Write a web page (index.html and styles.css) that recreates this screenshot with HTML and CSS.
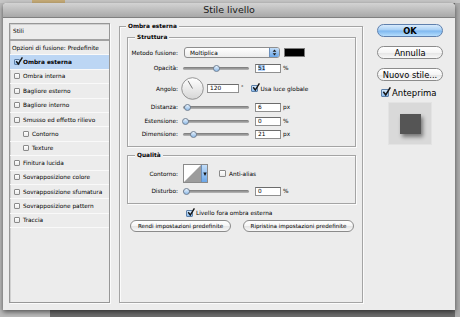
FILE: index.html
```html
<!DOCTYPE html>
<html lang="it">
<head>
  <meta charset="UTF-8" />
  <title>Stile livello</title>
  <link rel="stylesheet" href="styles.css">
</head>
<body>
<div class="desk-top"><span class="desk-tab"></span></div>
<div class="desk">
  <div class="window">
    <div class="titlebar">Stile livello</div>

    <div class="content">
      <!-- ===== Elenco stili ===== -->
      <div class="styles-list">
        <div class="list-head">Stili</div>
        <div class="item plain">Opzioni di fusione: Predefinite</div>
        <div class="item selected"><span class="cb on"><svg viewBox="0 0 8 8"><path d="M1.2 4.3 L3.3 7 L7.4 0.4"/></svg></span>Ombra esterna</div>
        <div class="item"><span class="cb"></span>Ombra interna</div>
        <div class="item"><span class="cb"></span>Bagliore esterno</div>
        <div class="item"><span class="cb"></span>Bagliore interno</div>
        <div class="item"><span class="cb"></span>Smusso ed effetto rilievo</div>
        <div class="item indent"><span class="cb"></span>Contorno</div>
        <div class="item indent"><span class="cb"></span>Texture</div>
        <div class="item"><span class="cb"></span>Finitura lucida</div>
        <div class="item"><span class="cb"></span>Sovrapposizione colore</div>
        <div class="item"><span class="cb"></span>Sovrapposizione sfumatura</div>
        <div class="item"><span class="cb"></span>Sovrapposizione pattern</div>
        <div class="item"><span class="cb"></span>Traccia</div>
      </div>

      <!-- ===== Ombra esterna ===== -->
      <fieldset class="group main-group">
        <legend>Ombra esterna</legend>

        <fieldset class="group sub">
          <legend>Struttura</legend>
          <div class="row r-blend">
            <span class="lbl">Metodo fusione:</span>
            <div class="select">Moltiplica
              <span class="stepper"><svg viewBox="0 0 6 9"><path d="M3 0.5 L5.4 3.6 L0.6 3.6 Z M3 8.5 L5.4 5.4 L0.6 5.4 Z"/></svg></span>
            </div>
            <span class="swatch"></span>
          </div>
          <div class="row r-opacity">
            <span class="lbl">Opacità:</span>
            <div class="slider"><span class="thumb" style="margin-left:30px"></span></div>
            <span class="field"><span class="sel">51</span></span>
            <span class="unit">%</span>
          </div>
          <div class="row r-angle">
            <span class="lbl">Angolo:</span>
            <svg class="dial" viewBox="0 0 23 23">
              <defs>
                <linearGradient id="dialFill" x1="0" y1="0" x2="0" y2="1">
                  <stop offset="0" stop-color="#ffffff"/>
                  <stop offset="1" stop-color="#d6d6d6"/>
                </linearGradient>
              </defs>
              <circle cx="11.5" cy="11.5" r="10.8" fill="url(#dialFill)" stroke="#8a8a8a" stroke-width="0.9"/>
              <line x1="11.5" y1="11.5" x2="7" y2="3.8" stroke="#555" stroke-width="0.8"/>
            </svg>
            <span class="field wide">120</span>
            <span class="deg">°</span>
            <span class="cb on mid"><svg viewBox="0 0 8 8"><path d="M1.2 4.3 L3.3 7 L7.4 0.4"/></svg></span>
            <span class="cb-text">Usa luce globale</span>
          </div>
          <div class="row r-dist">
            <span class="lbl">Distanza:</span>
            <div class="slider"><span class="thumb" style="margin-left:1px"></span></div>
            <span class="field">6</span>
            <span class="unit">px</span>
          </div>
          <div class="row r-spread">
            <span class="lbl">Estensione:</span>
            <div class="slider"><span class="thumb" style="margin-left:-1px"></span></div>
            <span class="field">0</span>
            <span class="unit">%</span>
          </div>
          <div class="row r-size">
            <span class="lbl">Dimensione:</span>
            <div class="slider"><span class="thumb" style="margin-left:7px"></span></div>
            <span class="field">21</span>
            <span class="unit">px</span>
          </div>
        </fieldset>

        <fieldset class="group sub quality">
          <legend>Qualità</legend>
          <div class="row r-contour">
            <span class="lbl">Contorno:</span>
            <span class="contour">
              <svg class="curve" viewBox="0 0 18 17" preserveAspectRatio="none"><path d="M0 17 L18 0 L18 17 Z"/></svg>
              <span class="contour-drop"><svg viewBox="0 0 4 6"><path d="M0.3 1.5 L3.7 1.5 L2 5 Z"/></svg></span>
            </span>
            <span class="cb aa"></span>
            <span class="cb-text">Anti-alias</span>
          </div>
          <div class="row r-noise">
            <span class="lbl">Disturbo:</span>
            <div class="slider"><span class="thumb" style="margin-left:0"></span></div>
            <span class="field">0</span>
            <span class="unit">%</span>
          </div>
        </fieldset>

        <div class="row r-knockout">
          <span class="cb on mid"><svg viewBox="0 0 8 8"><path d="M1.2 4.3 L3.3 7 L7.4 0.4"/></svg></span>
          <span class="cb-text">Livello fora ombra esterna</span>
        </div>
        <div class="defaults">
          <button class="pill small first">Rendi impostazioni predefinite</button>
          <button class="pill small second">Ripristina impostazioni predefinite</button>
        </div>
      </fieldset>

      <!-- ===== Pulsanti ===== -->
      <div class="side">
        <button class="pill big ok">OK</button>
        <button class="pill big">Annulla</button>
        <button class="pill big">Nuovo stile...</button>
        <div class="preview-toggle">
          <span class="cb on big-cb"><svg viewBox="0 0 8 8"><path d="M1.2 4.3 L3.3 7 L7.4 0.4"/></svg></span>
          <span>Anteprima</span>
        </div>
        <div class="preview"><span class="preview-square"></span></div>
      </div>
    </div>
  </div>
</div>
</body>
</html>
```

FILE: styles.css
```css
:root {
  --win: #ececec;
  --line: #a4a4a4;
  --hi: #fbfbfb;
  --sel: #bcd6f4;
}

/* ===== Reset ===== */
*, *::before, *::after { box-sizing: border-box; }
body {
  margin: 0;
  width: 460px;
  height: 317px;
  overflow: hidden;
  font-family: "DejaVu Sans", "Liberation Sans", sans-serif;
  font-size: 5.8px;
  color: #000;
  background: linear-gradient(to right, #b9b9b9 0, #b9b9b9 50px, #6c6c6c 50px, #6c6c6c 455px, #ababab 455px);
}
button { font-family: inherit; cursor: pointer; padding: 0; color: #000; }

/* ===== Desktop / window ===== */
.desk-top { height: 3px; background: #c6c6c6; display: flex; }
.desk-tab { width: 33px; margin-left: 32px; background: #c6ab77; }
.desk { display: flex; padding-left: 3px; }
.window {
  width: 452px;
  height: 307px;
  background: var(--win);
  border-radius: 4px 4px 0 0;
  box-shadow: 0 2px 5px rgba(0,0,0,.55);
}
.titlebar {
  height: 15px;
  line-height: 14px;
  text-align: center;
  font-size: 9.5px;
  color: #1a1a1a;
  background: linear-gradient(#d3d3d3, #a8a8a8);
  border-bottom: 1px solid #808080;
  border-radius: 4px 4px 0 0;
}
.content { display: flex; align-items: flex-start; padding: 4px 0 0 6px; }

/* ===== Styles list ===== */
.styles-list {
  width: 101px;
  height: 280px;
  flex: none;
  margin-top: 1px;
  border: 1px solid #979797;
  box-shadow: inset 1px 1px 0 #d0d0d0, 1px 1px 0 var(--hi);
}
.list-head {
  height: 17px;
  line-height: 15px;
  padding-left: 3px;
  border-bottom: 2px solid #a2a2a2;
}
.item {
  height: 14.4px;
  display: flex;
  align-items: center;
  padding-left: 4px;
  border-bottom: 1px solid #f9f9f9;
  white-space: nowrap;
}
.item.plain { padding-left: 2px; }
.item.indent { padding-left: 13px; }
.item.selected { background: var(--sel); font-weight: bold; }
.item .cb { margin-right: 3px; }

/* ===== Checkboxes ===== */
.cb {
  display: inline-block;
  flex: none;
  width: 6px;
  height: 6px;
  border: 1px solid #8a8a8a;
  border-radius: 1px;
  background: linear-gradient(#fff, #e9e9e9);
}
.cb.on { background: linear-gradient(#d5e8fb, #8bbcef); border-color: #5c7fa8; }
.cb svg { display: block; width: 8px; height: 8px; margin: -3px 0 0 0; overflow: visible; }
.cb svg path { fill: none; stroke: #141414; stroke-width: 1.4; }
.cb.mid { width: 7px; height: 7px; }
.cb-text { margin-left: 3px; white-space: nowrap; }

/* ===== Group boxes ===== */
fieldset.group {
  margin: 0;
  padding: 0;
  min-width: 0;
  border: 1px solid var(--line);
  box-shadow: 1px 1px 0 var(--hi), inset 1px 1px 0 var(--hi);
}
fieldset.group legend {
  font-weight: bold;
  line-height: 8px;
  padding: 0 2px;
  background: var(--win);
}
fieldset.main-group {
  width: 244px;
  height: 281px;
  flex: none;
  margin-left: 9px;
  padding: 0 6px 0 7px;
}
fieldset.main-group > legend { margin-left: -1px; }
fieldset.sub { margin-top: 3px; padding-bottom: 7px; }
fieldset.sub legend { margin-left: 7px; }
fieldset.quality { margin-top: 4px; }

/* ===== Rows ===== */
.row { display: flex; align-items: center; height: 10px; white-space: nowrap; }
.lbl { width: 50px; flex: none; text-align: right; margin-right: 5px; }
.r-blend { height: 11px; margin-top: 6px; }
.r-opacity { margin-top: 5px; }
.r-angle { height: 23px; margin-top: 4px; }
.r-dist { margin-top: 2px; }
.r-spread { margin-top: 4px; }
.r-size { margin-top: 3px; }
.r-contour { height: 19px; margin-top: 5px; }
.r-noise { margin-top: 3px; }
.r-knockout { height: 8px; margin: 5px 0 0 59px; }

.select {
  width: 96px;
  height: 11px;
  margin-left: 1px;
  border: 1px solid #8e8e8e;
  border-radius: 3px;
  background: linear-gradient(#fff, #ececec);
  display: flex;
  align-items: center;
  justify-content: space-between;
  padding-left: 5px;
}
.stepper {
  width: 10px;
  height: 100%;
  display: flex;
  align-items: center;
  justify-content: center;
  border-left: 1px solid #6b8fbb;
  border-radius: 0 2px 2px 0;
  background: linear-gradient(#c3def9, #6aa6e8);
}
.stepper svg { width: 5px; height: 7px; }
.stepper path { fill: #1c1c1c; }
.swatch { width: 21px; height: 9px; margin-left: 4px; background: #000; border: 1px solid #7a7a7a; }

.slider {
  width: 66px;
  height: 3px;
  flex: none;
  display: flex;
  align-items: center;
  border-radius: 2px;
  background: linear-gradient(#777, #b9b9b9);
}
.thumb {
  width: 7px;
  height: 7px;
  flex: none;
  border-radius: 50%;
  border: 1px solid #6f7f93;
  background: linear-gradient(#e8f2fc, #8fbbe8);
}
.field {
  width: 26px;
  height: 9px;
  flex: none;
  margin-left: 6px;
  padding-left: 2px;
  line-height: 7px;
  background: #fff;
  border: 1px solid #909090;
  border-top-color: #6c6c6c;
}
.field.wide { width: 32px; margin-left: 3px; }
.sel { background: #b3d4fc; }
.unit { margin-left: 2px; }
.deg { margin-left: 2px; margin-top: -4px; font-size: 5px; }
.r-angle .cb { margin-left: 7px; }
.dial { width: 23px; height: 23px; margin-left: -2px; flex: none; }

.contour {
  width: 25px;
  height: 19px;
  display: flex;
  border: 1px solid #8a8a8a;
  background: #fff;
}
.curve { flex: 1; height: 100%; }
.curve path { fill: #9c9c9c; }
.contour-drop {
  width: 6px;
  display: flex;
  align-items: center;
  justify-content: center;
  border-left: 1px solid #6b8fbb;
  background: linear-gradient(#c3def9, #6aa6e8);
}
.contour-drop svg { width: 4px; height: 6px; }
.contour-drop path { fill: #111; }
.cb.aa { width: 7px; height: 7px; margin-left: 11px; }

/* ===== Pill buttons ===== */
.pill {
  display: flex;
  align-items: center;
  justify-content: center;
  border: 1px solid #8b8b8b;
  border-radius: 7px;
  background: linear-gradient(#ffffff 0, #f5f5f5 50%, #e4e4e4 51%, #f8f8f8 100%);
  white-space: nowrap;
}
.defaults { display: flex; margin: 3px 0 0 3px; }
.pill.small { height: 12px; font-size: 5.6px; }
.pill.first { width: 101px; }
.pill.second { width: 111px; margin-left: 12px; }

.side { width: 66px; flex: none; margin: 2px 0 0 14px; display: flex; flex-direction: column; }
.pill.big { height: 13px; font-size: 8.3px; }
.pill.big + .pill.big { margin-top: 9px; }
.pill.ok {
  font-weight: bold;
  border-color: #5f80ad;
  background: linear-gradient(#d9ebfc 0, #a6cff5 48%, #7cb6ef 52%, #b6defc 100%);
}
.preview-toggle {
  display: flex;
  align-items: center;
  height: 9px;
  margin-top: 7px;
  padding-left: 4px;
  font-size: 8.5px;
}
.cb.big-cb { width: 8px; height: 8px; margin-right: 3px; }
.cb.big-cb svg { width: 9px; height: 9px; }
.preview {
  width: 44px;
  height: 43px;
  margin: 5px 0 0 11px;
  display: flex;
  align-items: center;
  justify-content: center;
  background: #d9d9d9;
  border: 1px solid #e3e3e3;
}
.preview-square {
  width: 21px;
  height: 20px;
  background: #555;
  box-shadow: 2px 3px 4px rgba(0,0,0,.45);
}
```
